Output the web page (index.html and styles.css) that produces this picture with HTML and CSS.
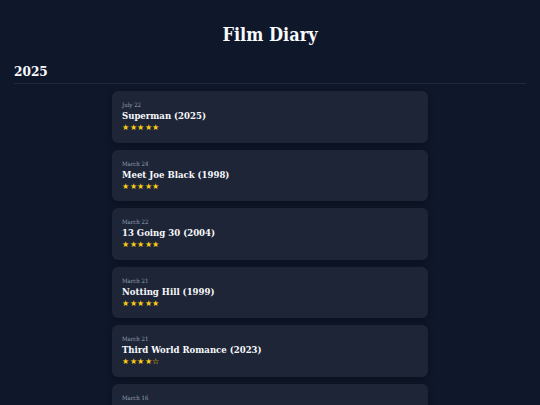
FILE: index.html
```html
<!DOCTYPE html>
<html lang="en">
<head>
<meta charset="utf-8">
<title>Film Diary</title>
<link rel="stylesheet" href="styles.css">
</head>
<body>
<header class="top">
  <h1 class="title">Film Diary</h1>
</header>
<section class="year">
  <h2 class="year-label">2025</h2>
  <ul class="entries">
    <li class="card">
      <div class="date">July 22</div>
      <div class="film">Superman (2025)</div>
      <div class="stars">★★★★★</div>
    </li>
    <li class="card">
      <div class="date">March 24</div>
      <div class="film">Meet Joe Black (1998)</div>
      <div class="stars">★★★★★</div>
    </li>
    <li class="card">
      <div class="date">March 22</div>
      <div class="film">13 Going 30 (2004)</div>
      <div class="stars">★★★★★</div>
    </li>
    <li class="card">
      <div class="date">March 21</div>
      <div class="film">Notting Hill (1999)</div>
      <div class="stars">★★★★★</div>
    </li>
    <li class="card">
      <div class="date">March 21</div>
      <div class="film">Third World Romance (2023)</div>
      <div class="stars">★★★★☆</div>
    </li>
    <li class="card">
      <div class="date">March 16</div>
      <div class="film">Your Name Engraved Herein (2020)</div>
      <div class="stars">★★★★★</div>
    </li>
  </ul>
</section>
</body>
</html>
```
FILE: styles.css
```css
* { box-sizing: border-box; }
html, body {
  margin: 0;
  padding: 0;
  background: #0f172a;
  color: #f1f5f9;
  font-family: "DejaVu Serif Condensed", "DejaVu Serif", Georgia, serif;
}
body {
  padding: 0 14px;
}
.top {
  padding-top: 23px;
  text-align: center;
}
.title {
  margin: 0;
  font-size: 18px;
  line-height: 24px;
  font-weight: bold;
  color: #f8fafc;
}
.year {
  margin-top: 15px;
}
.year-label {
  margin: 0;
  font-size: 13.5px;
  line-height: 18px;
  font-weight: bold;
  color: #f8fafc;
  padding-bottom: 3px;
  border-bottom: 1px solid #1e293b;
}
.entries {
  list-style: none;
  margin: 7px auto 0;
  padding: 0;
  width: 316px;
  display: flex;
  flex-direction: column;
  gap: 7px;
}
.card {
  background: #1e2537;
  border-radius: 6px;
  padding: 9px 10px 9px;
  height: 51.5px;
  box-shadow: 0 2px 6px rgba(0,0,0,0.35);
}
.date {
  font-size: 6px;
  line-height: 9px;
  color: #94a3b8;
}
.film {
  font-size: 9.5px;
  line-height: 13px;
  font-weight: bold;
  color: #f8fafc;
}
.stars {
  font-size: 8px;
  line-height: 11px;
  color: #facc15;
  letter-spacing: 0.5px;
}
```
